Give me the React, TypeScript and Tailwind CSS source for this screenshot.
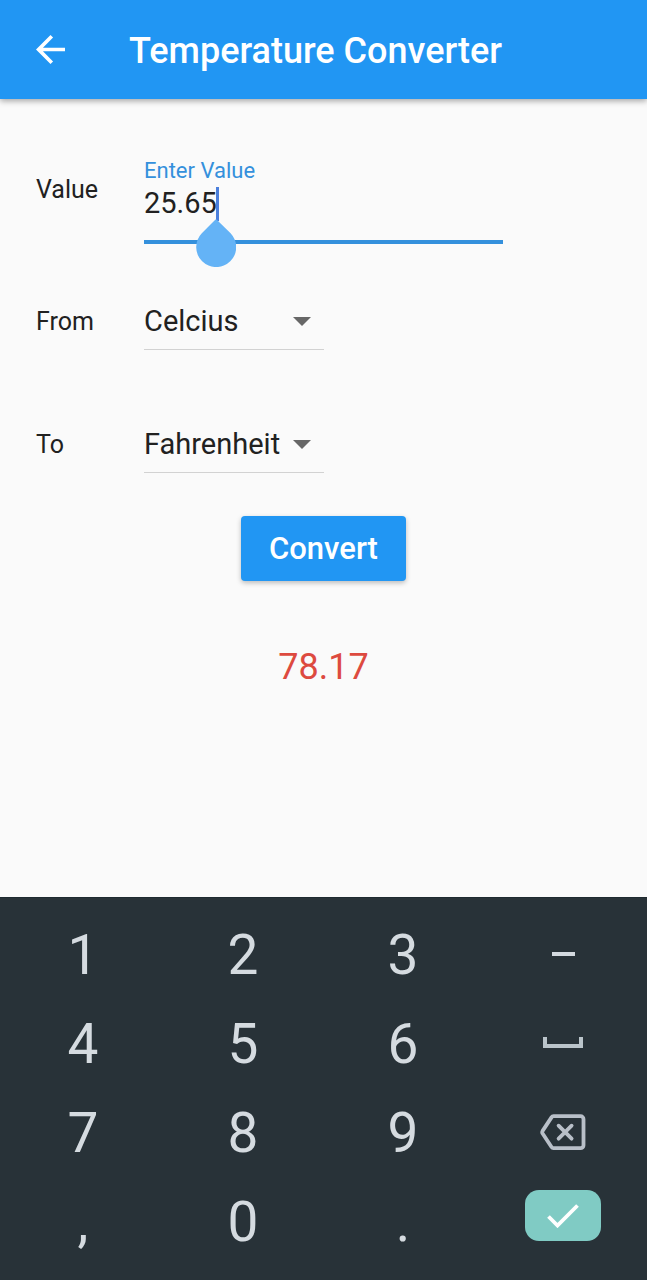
import { useState } from "react";
import type { ReactNode } from "react";

const UNITS = ["Celcius", "Fahrenheit", "Kelvin"];

function BackIcon() {
  return (
    <svg viewBox="4 4 16 16" className="h-[29px] w-[29px]" fill="currentColor" aria-hidden="true">
      <path d="M20 11H7.83l5.59-5.59L12 4l-8 8 8 8 1.41-1.41L7.83 13H20v-2z" />
    </svg>
  );
}

function CaretHandle() {
  return (
    <svg
      viewBox="0 0 40 48"
      className="pointer-events-none absolute top-[59px] left-[52px] h-12 w-10"
      aria-hidden="true"
    >
      <path
        d="M20.500 0.500L34.600 14.200A20 20 0 1 1 5.800 14.200L19.500 0.500Z"
        fill="#64b3f6"
      />
    </svg>
  );
}

function MinusIcon() {
  return (
    <svg viewBox="0 0 24 8" className="h-2 w-6" aria-hidden="true">
      <rect x="1" y="2" width="23" height="4" fill="#d3d9df" />
    </svg>
  );
}

function SpaceIcon() {
  return (
    <svg viewBox="0 0 40 12" className="h-3 w-10" aria-hidden="true">
      <path d="M2 0V9H38V0" fill="none" stroke="#bac4ca" strokeWidth="4" />
    </svg>
  );
}

function BackspaceIcon() {
  return (
    <svg viewBox="0 0 46 38" className="h-[38px] w-[46px]" fill="none" stroke="#b8bfc8" aria-hidden="true">
      <path
        d="M13.500 3.200H40.500A3 3 0 0 1 43.500 6.200V32.200A3 3 0 0 1 40.500 35.200H13.500Q12.300 35.200 11.500 34L2.600 20.500Q1.800 19.200 2.600 17.900L11.500 4.400Q12.300 3.200 13.500 3.200Z"
        strokeWidth="3.800"
        strokeLinejoin="round"
      />
      <path d="M18.600 12.700L31.600 25.700M31.600 12.700L18.600 25.700" strokeWidth="3.800" strokeLinecap="round" />
    </svg>
  );
}

function CheckIcon() {
  return (
    <svg viewBox="0 0 32 24" className="h-6 w-8" fill="none" stroke="white" aria-hidden="true">
      <path d="M1.500 12.500L10.500 21.500L30.500 1.500" strokeWidth="3.800" />
    </svg>
  );
}

function UnitField({
  id,
  label,
  value,
  onChange,
}: {
  id: string;
  label: string;
  value: string;
  onChange: (unit: string) => void;
}) {
  return (
    <div className="flex items-center">
      <label htmlFor={id} className="w-[108px] shrink-0 text-[25px] leading-8">
        {label}
      </label>
      <div className="relative w-[180px]">
        <select
          id={id}
          value={value}
          onChange={(e) => onChange(e.target.value)}
          className="block h-[57px] w-full appearance-none border-b border-[#d2d2d2] bg-transparent pt-[2px] text-[29px] outline-none"
        >
          {UNITS.map((unit) => (
            <option key={unit}>{unit}</option>
          ))}
        </select>
        <svg
          viewBox="0 0 18 9"
          className="pointer-events-none absolute top-6 right-[13px] h-[9px] w-[18px]"
          aria-hidden="true"
        >
          <path d="M0 0H18L9 9Z" fill="#676767" />
        </svg>
      </div>
    </div>
  );
}

function Key({ label, onPress, children }: { label: string; onPress: () => void; children: ReactNode }) {
  return (
    <button
      type="button"
      aria-label={label}
      onClick={onPress}
      className="flex h-[89px] items-center justify-center text-[55px] leading-none text-[#d5dbe0]"
    >
      {children}
    </button>
  );
}

function toCelsius(value: number, unit: string) {
  if (unit === "Fahrenheit") return ((value - 32) * 5) / 9;
  if (unit === "Kelvin") return value - 273.15;
  return value;
}

function fromCelsius(value: number, unit: string) {
  if (unit === "Fahrenheit") return (value * 9) / 5 + 32;
  if (unit === "Kelvin") return value + 273.15;
  return value;
}

export default function App() {
  const [value, setValue] = useState("25.65");
  const [from, setFrom] = useState("Celcius");
  const [to, setTo] = useState("Fahrenheit");
  const [result, setResult] = useState("78.17");

  const type = (char: string) => setValue((v) => v + char);
  const erase = () => setValue((v) => v.slice(0, -1));
  const convert = () => setResult(fromCelsius(toCelsius(parseFloat(value), from), to).toFixed(2));

  const textKey = (char: string) => (
    <Key label={char} onPress={() => type(char)}>
      <span className="pt-[3px]">{char}</span>
    </Key>
  );

  return (
    <div className="flex min-h-screen flex-col bg-[#fafafa] font-[Roboto,sans-serif] text-[#212121]">
      <header className="relative flex h-[99px] items-center bg-[#2196f3] px-9 text-white shadow-[0_2px_6px_rgba(0,0,0,0.35)]">
        <button type="button" aria-label="Back" className="mr-16">
          <BackIcon />
        </button>
        <h1 className="pt-[2px] text-4xl font-medium">Temperature Converter</h1>
      </header>

      <main className="flex flex-1 flex-col px-9 pt-[61px]">
        <div className="flex items-start">
          <label htmlFor="value" className="flex h-15 w-[108px] shrink-0 items-center text-[25px]">
            Value
          </label>
          <div className="relative w-[359px] border-b-4 border-[#3490dc] pb-[15px]">
            <label htmlFor="value" className="block text-[22px] leading-[22px] text-[#3490dc]">
              Enter Value
            </label>
            <input
              id="value"
              inputMode="decimal"
              value={value}
              onChange={(e) => setValue(e.target.value)}
              className="block h-[43px] w-full bg-transparent text-[29px] caret-transparent outline-none"
            />
            <span className="absolute top-[27px] left-[72px] h-[34px] w-[3px] bg-[#4b7fdc]" />
            <CaretHandle />
          </div>
        </div>

        <div className="mt-[49px] flex flex-col gap-[66px]">
          <UnitField id="from" label="From" value={from} onChange={setFrom} />
          <UnitField id="to" label="To" value={to} onChange={setTo} />
        </div>

        <button
          type="button"
          onClick={convert}
          className="mt-[43px] h-[65px] self-center rounded-[4px] bg-[#2196f3] px-7 pt-[2px] text-[31px] font-medium text-white shadow-[0_2px_5px_rgba(0,0,0,0.25)]"
        >
          Convert
        </button>
        <output className="mt-[66px] self-center text-4xl text-[#dd4a3f]">{result}</output>
      </main>

      <section
        aria-label="Keypad"
        className="grid grid-cols-4 border-t border-[#1f2a30] bg-[#283238] pt-[11px] pr-1 pb-[15px] pl-[3px]"
      >
        {textKey("1")}
        {textKey("2")}
        {textKey("3")}
        <Key label="Minus" onPress={() => type("-")}>
          <MinusIcon />
        </Key>
        {textKey("4")}
        {textKey("5")}
        {textKey("6")}
        <Key label="Space" onPress={() => type(" ")}>
          <SpaceIcon />
        </Key>
        {textKey("7")}
        {textKey("8")}
        {textKey("9")}
        <Key label="Backspace" onPress={erase}>
          <BackspaceIcon />
        </Key>
        {textKey(",")}
        {textKey("0")}
        {textKey(".")}
        <Key label="Done" onPress={convert}>
          <span className="mb-[10px] flex h-[51px] w-[76px] items-center justify-center rounded-[14px] bg-[#80cbc4]">
            <CheckIcon />
          </span>
        </Key>
      </section>
    </div>
  );
}
